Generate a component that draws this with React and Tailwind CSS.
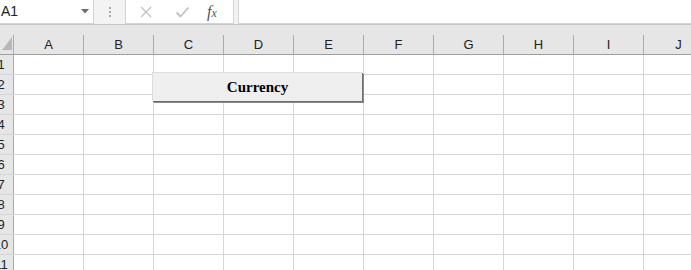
import { useState } from "react";

const cols = ["A", "B", "C", "D", "E", "F", "G", "H", "I", "J"];
const rows = [1, 2, 3, 4, 5, 6, 7, 8, 9, 10, 11];

function Toolbar() {
    return (
        <div className="flex h-[24px] bg-[#f3f3f3]">
            <div className="relative flex w-[94px] shrink-0 items-center bg-white border-r border-b border-[#d4d4d4]">
                <span className="ml-[1px] text-[14px] text-[#222]" style={{ fontFamily: '"Liberation Sans", sans-serif' }}>A1</span>
                <svg className="absolute left-[81px] top-[9px]" width="8" height="5" viewBox="0 0 8 5">
                    <path d="M0 0 L8 0 L4 4.5 Z" fill="#6d6d6d" />
                </svg>
            </div>
            <div className="flex w-[31px] shrink-0 flex-col items-center justify-center gap-[2px]">
                <div className="h-[2px] w-[2px] bg-[#a8a8a8]" />
                <div className="h-[2px] w-[2px] bg-[#a8a8a8]" />
                <div className="h-[2px] w-[2px] bg-[#a8a8a8]" />
            </div>
            <div className="flex w-[109px] shrink-0 items-center bg-white border-x border-b border-[#d4d4d4]">
                <svg className="ml-[13px]" width="14" height="14" viewBox="0 0 14 14">
                    <path d="M2 2 L12 12 M12 2 L2 12" stroke="#c2c2c2" strokeWidth="1.3" fill="none" />
                </svg>
                <svg className="ml-[22px]" width="15" height="14" viewBox="0 0 15 14">
                    <path d="M1.5 7.5 L5.5 11.5 L13.5 2.5" stroke="#c2c2c2" strokeWidth="1.8" fill="none" />
                </svg>
                <span className="ml-[17px] text-[16px] italic text-[#555]" style={{ fontFamily: '"Liberation Serif", serif' }}>f<span className="text-[12px]">x</span></span>
            </div>
            <div className="w-[4px] shrink-0" />
            <div className="flex-1 bg-white border-l border-b border-[#d4d4d4]" />
        </div>
    );
}

function Header() {
    return (
        <div className="h-[31px] bg-[#e6e6e6] border-t border-b border-[#c6c6c6] border-b-[#9e9e9e] flex items-end">
            <div className="relative h-[19px] w-[14px] shrink-0 border-r border-[#ababab]">
                <svg className="absolute left-[2px] top-[2px]" width="10" height="13" viewBox="0 0 10 13">
                    <path d="M10 0 L10 13 L0 13 Z" fill="#b8b8b8" />
                </svg>
            </div>
            {cols.map((c) => (
                <div key={c} className="flex h-[19px] w-[70px] shrink-0 items-center justify-center border-r border-[#ababab] pt-[1px] text-[13px] text-[#222]">
                    {c}
                </div>
            ))}
        </div>
    );
}

function Sheet() {
    return (
        <div className="relative">
            {rows.map((r) => (
                <div key={r} className="flex h-[20px] border-b border-[#d6d6d6]">
                    <div className="w-[14px] shrink-0 overflow-hidden bg-[#e6e6e6] border-r border-[#ababab]">
                        <div className="ml-[-12px] flex h-full w-[26px] items-center justify-center text-[13px] text-[#222]">{r}</div>
                    </div>
                    {cols.map((c) => (
                        <div key={c} className="h-full w-[70px] shrink-0 border-r border-[#d6d6d6] bg-white" />
                    ))}
                </div>
            ))}
            <button className="absolute left-[152px] top-[17px] flex h-[29px] w-[210px] items-center justify-center bg-[#efefef] border-t border-l border-[#dcdcdc] shadow-[1px_1px_0_#6d6d6d,2px_2px_0_#8a8a8a] text-[15px] font-bold text-black" style={{ fontFamily: '"Liberation Serif", serif' }}>
                Currency
            </button>
        </div>
    );
}

export default function App() {
    return (
        <div className="h-[270px] w-[691px] overflow-hidden bg-white" style={{ fontFamily: '"Liberation Sans", sans-serif' }}>
            <Toolbar />
            <Header />
            <Sheet />
        </div>
    );
}
